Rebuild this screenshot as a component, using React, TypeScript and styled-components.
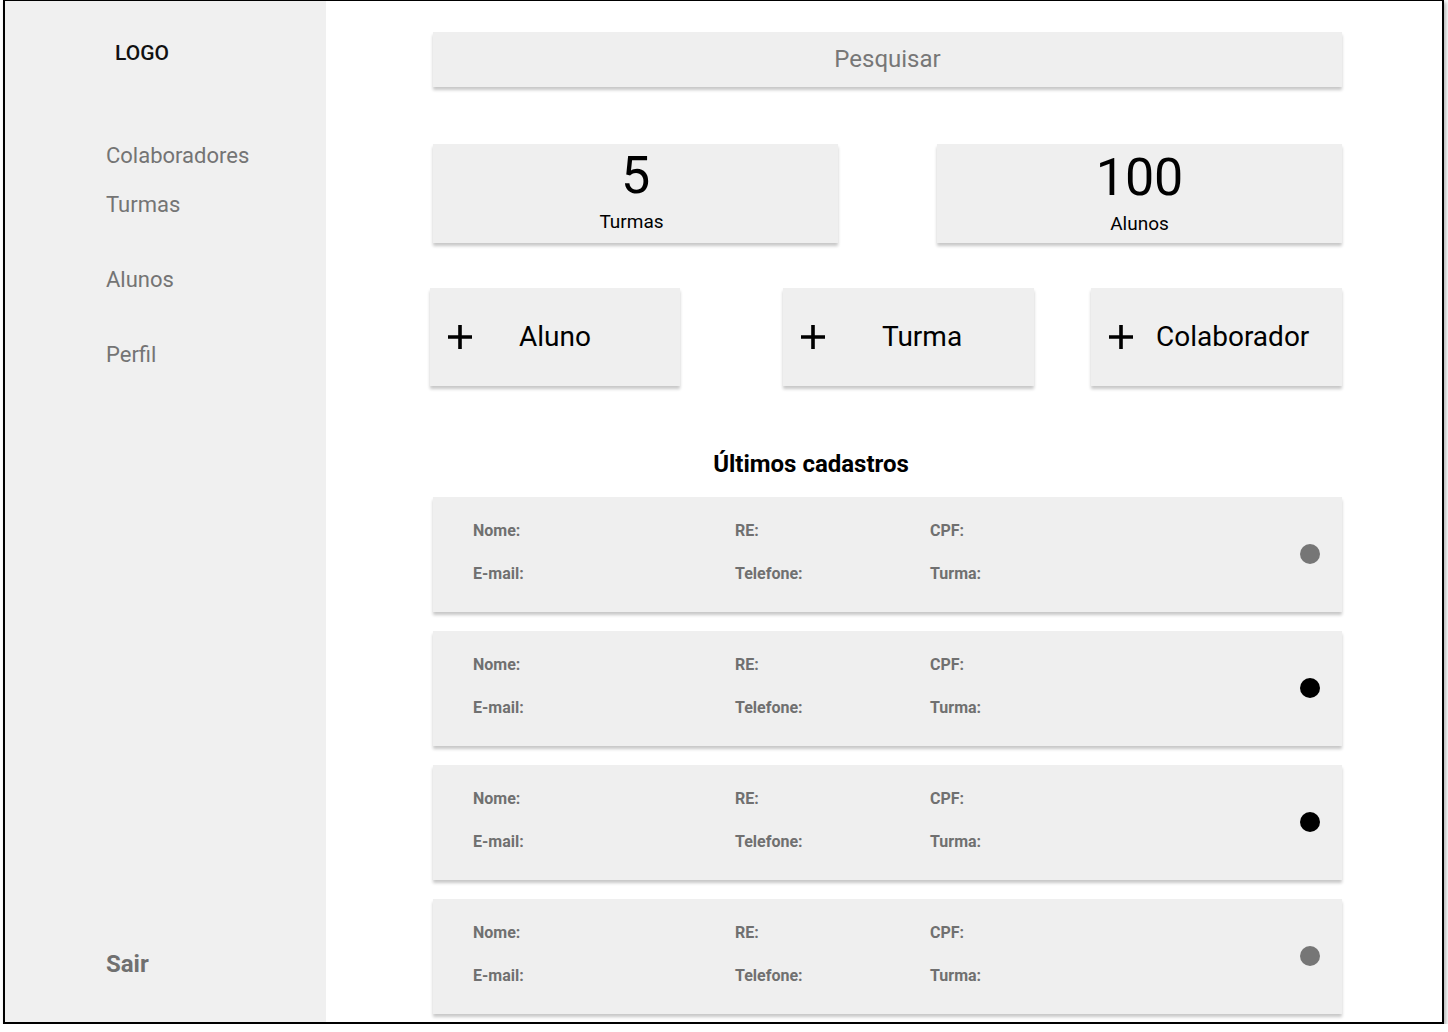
import React from "react";
import styled, { createGlobalStyle } from "styled-components";

const Global = createGlobalStyle`
  html, body { margin: 0; padding: 0; background: #fff; }
  body { font-family: Roboto, "Liberation Sans", Arial, sans-serif; overflow: hidden; }
  * { box-sizing: border-box; }
`;

const Frame = styled.div`
  margin: -1px 0 0 3px;
  width: 1441px;
  height: 1025px;
  border: 2px solid #000;
  box-shadow: 2px 3px 4px rgba(0, 0, 0, 0.3);
  display: flex;
  overflow: hidden;
  background: #fff;
`;

const Sidebar = styled.aside`
  width: 321px;
  flex: none;
  background: #f0f0f0;
  display: flex;
  flex-direction: column;
  padding: 40px 0 0 101px;
`;

const Logo = styled.div`
  font-size: 21px;
  font-weight: 500;
  color: #111;
  line-height: 24px;
  margin-left: 9px;
`;

const Nav = styled.nav`
  display: flex;
  flex-direction: column;
  margin-top: 78px;
`;

const NavItem = styled.a<{ $gap: number }>`
  font-size: 22px;
  color: #747474;
  line-height: 26px;
  margin-top: ${(p) => p.$gap}px;
  text-decoration: none;
`;

const Logout = styled.a`
  margin-top: auto;
  margin-bottom: 44px;
  font-size: 24px;
  font-weight: 700;
  color: #707070;
  line-height: 28px;
`;

const Main = styled.main`
  flex: 1;
  padding: 31px 0 0 107px;
  display: flex;
  flex-direction: column;
  width: 1016px;
`;

const Content = styled.div`
  width: 909px;
  display: flex;
  flex-direction: column;
`;

const Surface = styled.div`
  background: #efefef;
  box-shadow: 0 3px 3px rgba(0, 0, 0, 0.22);
`;

const Search = styled(Surface)`
  height: 55px;
  display: flex;
  align-items: center;
  justify-content: center;
  font-size: 24px;
  color: #777;
  padding-bottom: 2px;
`;

const StatsRow = styled.div`
  display: flex;
  justify-content: space-between;
  margin-top: 57px;
`;

const StatCard = styled(Surface)<{ $top: number }>`
  width: 405px;
  height: 99px;
  display: flex;
  flex-direction: column;
  align-items: center;
  padding-top: ${(p) => p.$top}px;
`;

const StatValue = styled.div`
  font-size: 52px;
  line-height: 52px;
  color: #000;
`;

const StatLabel = styled.div<{ $shift: number }>`
  font-size: 19px;
  line-height: 20px;
  color: #000;
  margin-top: 10px;
  margin-left: ${(p) => p.$shift}px;
`;

const ActionRow = styled.div`
  display: flex;
  margin: 45px 0 0 -3px;
`;

const ActionButton = styled(Surface)<{ $left: number; $width: number }>`
  width: ${(p) => p.$width}px;
  height: 98px;
  margin-left: ${(p) => p.$left}px;
  display: flex;
  align-items: center;
  padding-left: 17px;
  cursor: pointer;
`;

const ActionLabel = styled.span<{ $gap: number }>`
  font-size: 28px;
  color: #000;
  margin-left: ${(p) => p.$gap}px;
  line-height: 32px;
`;

const SectionTitle = styled.h2`
  margin: 64px 0 0 0;
  font-size: 24px;
  font-weight: 700;
  line-height: 28px;
  color: #000;
  width: 756px;
  text-align: center;
`;

const List = styled.div`
  display: flex;
  flex-direction: column;
  gap: 19px;
  margin-top: 19px;
`;

const RecordCard = styled(Surface)`
  height: 115px;
  display: flex;
  padding: 24px 22px 0 40px;
`;

const Fields = styled.div`
  flex: 1;
  display: grid;
  grid-template-columns: 262px 195px 1fr;
  grid-auto-rows: 19px;
  row-gap: 24px;
`;

const Field = styled.span`
  font-size: 16px;
  font-weight: 700;
  color: #707070;
  line-height: 19px;
`;

const Dot = styled.span<{ $dark: boolean }>`
  width: 20px;
  height: 20px;
  border-radius: 50%;
  background: ${(p) => (p.$dark ? "#000" : "#767676")};
  margin-top: 23px;
  flex: none;
`;

const Plus = () => (
  <svg width="26" height="26" viewBox="0 0 26 26">
    <path d="M13 1v24M1 13h24" stroke="#000" strokeWidth="3.6" />
  </svg>
);

const records = [false, true, true, false];

const actions = [
  { label: "Aluno", left: 0, width: 250, gap: 46 },
  { label: "Turma", left: 103, width: 251, gap: 56 },
  { label: "Colaborador", left: 57, width: 251, gap: 22 },
];

export default function App() {
  return (
    <>
      <Global />
      <Frame>
        <Sidebar>
          <Logo>LOGO</Logo>
          <Nav>
            <NavItem $gap={0}>Colaboradores</NavItem>
            <NavItem $gap={23}>Turmas</NavItem>
            <NavItem $gap={49}>Alunos</NavItem>
            <NavItem $gap={49}>Perfil</NavItem>
          </Nav>
          <Logout>Sair</Logout>
        </Sidebar>
        <Main>
          <Content>
            <Search>Pesquisar</Search>
            <StatsRow>
              <StatCard $top={6}>
                <StatValue>5</StatValue>
                <StatLabel $shift={-8}>Turmas</StatLabel>
              </StatCard>
              <StatCard $top={8}>
                <StatValue>100</StatValue>
                <StatLabel $shift={0}>Alunos</StatLabel>
              </StatCard>
            </StatsRow>
            <ActionRow>
              {actions.map((a) => (
                <ActionButton key={a.label} $left={a.left} $width={a.width}>
                  <Plus />
                  <ActionLabel $gap={a.gap}>{a.label}</ActionLabel>
                </ActionButton>
              ))}
            </ActionRow>
            <SectionTitle>Últimos cadastros</SectionTitle>
            <List>
              {records.map((dark, i) => (
                <RecordCard key={i}>
                  <Fields>
                    <Field>Nome:</Field>
                    <Field>RE:</Field>
                    <Field>CPF:</Field>
                    <Field>E-mail:</Field>
                    <Field>Telefone:</Field>
                    <Field>Turma:</Field>
                  </Fields>
                  <Dot $dark={dark} />
                </RecordCard>
              ))}
            </List>
          </Content>
        </Main>
      </Frame>
    </>
  );
}
